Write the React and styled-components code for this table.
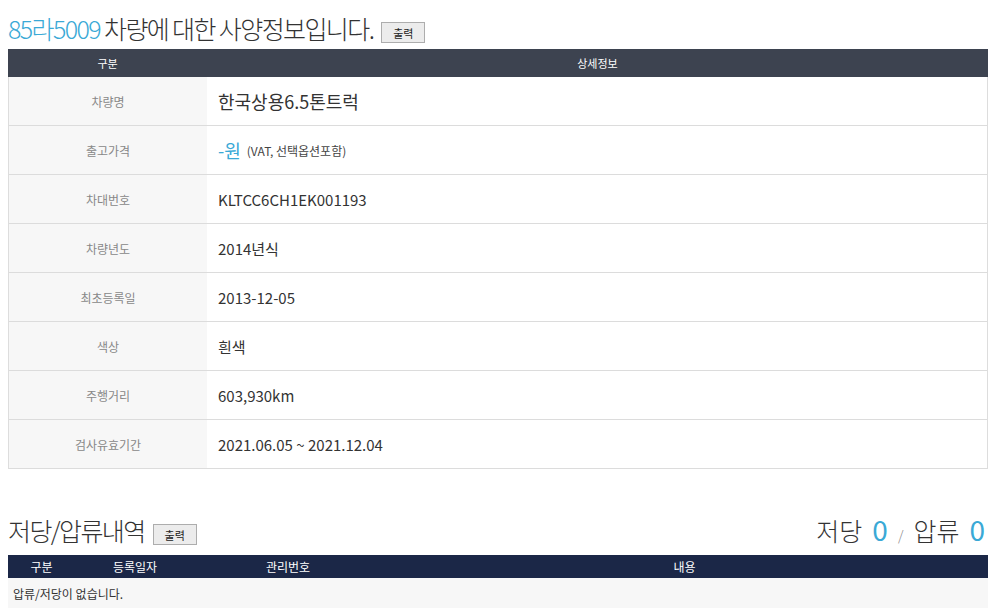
import React from "react"
import styled, { createGlobalStyle } from "styled-components"

const GlobalStyle = createGlobalStyle`
    *{
        margin:0;
        padding:0;
        box-sizing:border-box;
    }
    body{
        background-color:#fff;
        color:#333;
        font-family: "Noto Sans CJK KR", "Noto Sans", sans-serif;
    }
`

const Page = styled.div`
    width: 993px;
    padding: 8px 5px 0 8px;
`

const TitleRow = styled.div`
    display: flex;
    align-items: flex-end;
    justify-content: space-between;
    height: ${p => p.h}px;
`

const Title = styled.h2`
    font-size: 25px;
    font-weight: 300;
    letter-spacing: -1.6px;
    color: #333;
    line-height: 1;
    display: flex;
    align-items: flex-end;
`

const Blue = styled.span`
    color: #3aa9d6;
`

const PrintButton = styled.button`
    font-family: "Noto Sans CJK KR", sans-serif;
    font-size: 11px;
    letter-spacing: 0;
    color: #222;
    background: #ececec;
    border: 1px solid #adadad;
    width: 44px;
    height: 21px;
    margin-left: 8px;
    margin-bottom: -2px;
`

const SpecTable = styled.div`
    margin-top: 8px;
    width: 980px;
    border-right: 1px solid #ddd;
    border-left: 1px solid #ddd;
`

const SpecHead = styled.div`
    display: grid;
    grid-template-columns: 199px 1fr;
    height: 28px;
    background: #3d4350;
    color: #fff;
    font-size: 11px;
    align-items: center;
    text-align: center;
    margin: 0 -1px;
`

const SpecRow = styled.div`
    display: grid;
    grid-template-columns: 198px 1fr;
    height: 49px;
    border-bottom: 1px solid #dcdcdc;
`

const Label = styled.div`
    background: #f7f7f7;
    color: #888;
    font-size: 12px;
    display: flex;
    align-items: center;
    justify-content: center;
`

const Value = styled.div`
    display: flex;
    align-items: center;
    padding-left: 11px;
    font-size: ${p => p.size || 15}px;
    color: #333;
`

const Price = styled.span`
    color: #3aa9d6;
    font-size: 18px;
    margin-right: 6px;
`

const Note = styled.span`
    font-size: 12px;
    color: #444;
`

const Counts = styled.div`
    font-size: 25px;
    font-weight: 300;
    color: #333;
    line-height: 1;
    display: flex;
    align-items: baseline;
    margin-right: 3px;
`

const CountNum = styled.span`
    color: #3aa9d6;
    font-weight: 400;
    font-size: 28px;
    margin: 0 ${p => p.mr}px 0 10px;
`

const Slash = styled.span`
    font-size: 14px;
    color: #888;
    margin-right: 10px;
`

const LienTable = styled.div`
    margin-top: 12px;
    width: 980px;
`

const LienHead = styled.div`
    display: grid;
    grid-template-columns: 67px 120px 186px 1fr;
    height: 23px;
    background: #1b2747;
    color: #fff;
    font-size: 12px;
    align-items: center;
    text-align: center;
`

const Empty = styled.div`
    background: #f7f7f7;
    height: 30px;
    font-size: 12px;
    color: #333;
    display: flex;
    align-items: center;
    padding-left: 5px;
`

const specs = [
    { label: "차량명", value: "한국상용6.5톤트럭", size: 18 },
    { label: "출고가격", price: true },
    { label: "차대번호", value: "KLTCC6CH1EK001193" },
    { label: "차량년도", value: "2014년식" },
    { label: "최초등록일", value: "2013-12-05" },
    { label: "색상", value: "흰색" },
    { label: "주행거리", value: "603,930km" },
    { label: "검사유효기간", value: "2021.06.05 ~ 2021.12.04" },
]

export default function App() {
    return (
        <Page>
            <GlobalStyle />
            <TitleRow h={33}>
                <Title>
                    <Blue>85라5009</Blue>&nbsp;차량에 대한 사양정보입니다.
                    <PrintButton>출력</PrintButton>
                </Title>
            </TitleRow>
            <SpecTable>
                <SpecHead>
                    <span>구분</span>
                    <span>상세정보</span>
                </SpecHead>
                {specs.map((item, index) => (
                    <SpecRow key={index}>
                        <Label>{item.label}</Label>
                        {item.price ? (
                            <Value>
                                <Price>-원</Price>
                                <Note>(VAT, 선택옵션포함)</Note>
                            </Value>
                        ) : (
                            <Value size={item.size}>{item.value}</Value>
                        )}
                    </SpecRow>
                ))}
            </SpecTable>

            <TitleRow h={74}>
                <Title>
                    저당/압류내역
                    <PrintButton>출력</PrintButton>
                </Title>
                <Counts>
                    저당<CountNum mr={10}>0</CountNum>
                    <Slash>/</Slash>
                    압류<CountNum mr={0}>0</CountNum>
                </Counts>
            </TitleRow>
            <LienTable>
                <LienHead>
                    <span>구분</span>
                    <span>등록일자</span>
                    <span>관리번호</span>
                    <span>내용</span>
                </LienHead>
                <Empty>압류/저당이 없습니다.</Empty>
            </LienTable>
        </Page>
    )
}
